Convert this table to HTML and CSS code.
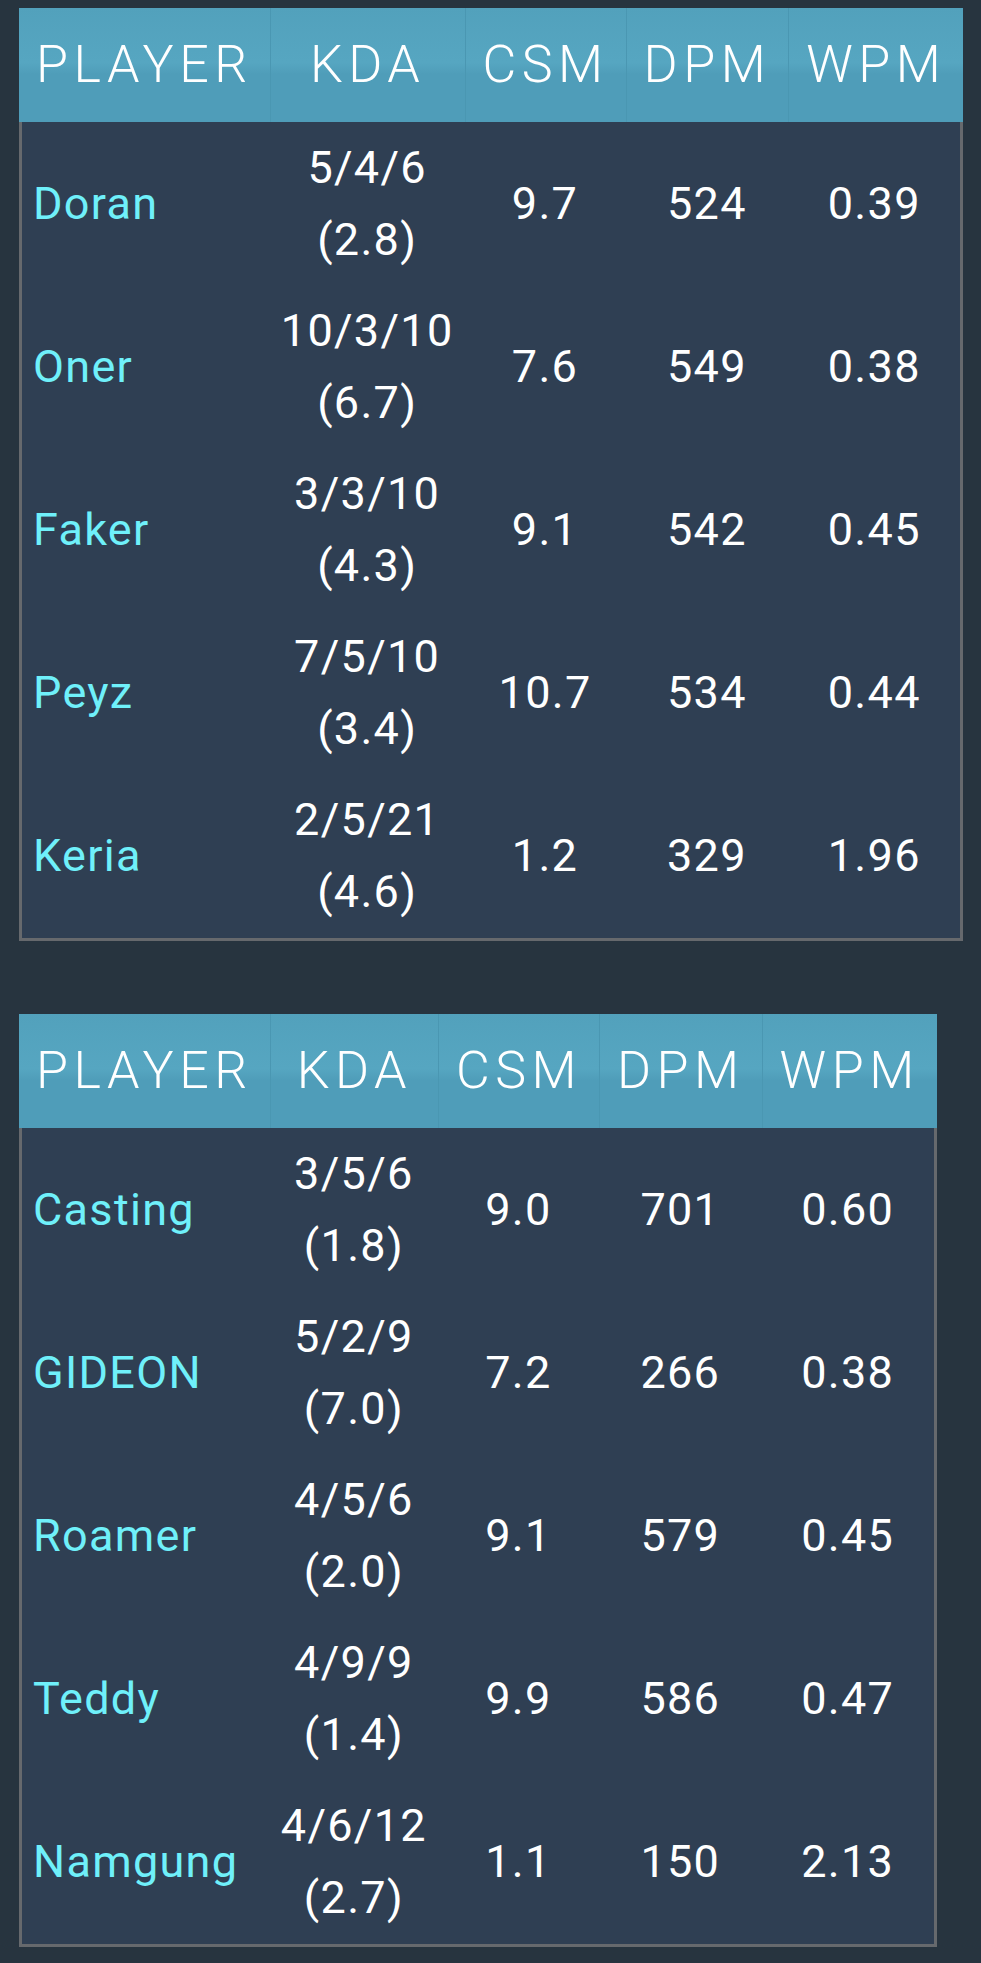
FILE: index.html
```html
<!DOCTYPE html>
<html lang="en">
<head>
<meta charset="utf-8">
<title>Player stats</title>
<link rel="stylesheet" href="styles.css">
</head>
<body>
<div class="page">
  <table class="stats">
    <thead>
      <tr><th>PLAYER</th><th>KDA</th><th>CSM</th><th>DPM</th><th>WPM</th></tr>
    </thead>
    <tbody>
      <tr><td class="name">Doran</td><td>5/4/6<br>(2.8)</td><td>9.7</td><td>524</td><td>0.39</td></tr>
      <tr><td class="name">Oner</td><td>10/3/10<br>(6.7)</td><td>7.6</td><td>549</td><td>0.38</td></tr>
      <tr><td class="name">Faker</td><td>3/3/10<br>(4.3)</td><td>9.1</td><td>542</td><td>0.45</td></tr>
      <tr><td class="name">Peyz</td><td>7/5/10<br>(3.4)</td><td>10.7</td><td>534</td><td>0.44</td></tr>
      <tr><td class="name">Keria</td><td>2/5/21<br>(4.6)</td><td>1.2</td><td>329</td><td>1.96</td></tr>
    </tbody>
  </table>
  <table class="stats">
    <thead>
      <tr><th>PLAYER</th><th>KDA</th><th>CSM</th><th>DPM</th><th>WPM</th></tr>
    </thead>
    <tbody>
      <tr><td class="name">Casting</td><td>3/5/6<br>(1.8)</td><td>9.0</td><td>701</td><td>0.60</td></tr>
      <tr><td class="name">GIDEON</td><td>5/2/9<br>(7.0)</td><td>7.2</td><td>266</td><td>0.38</td></tr>
      <tr><td class="name">Roamer</td><td>4/5/6<br>(2.0)</td><td>9.1</td><td>579</td><td>0.45</td></tr>
      <tr><td class="name">Teddy</td><td>4/9/9<br>(1.4)</td><td>9.9</td><td>586</td><td>0.47</td></tr>
      <tr><td class="name">Namgung</td><td>4/6/12<br>(2.7)</td><td>1.1</td><td>150</td><td>2.13</td></tr>
    </tbody>
  </table>
</div>
</body>
</html>
```
FILE: styles.css
```css
html, body {
  margin: 0;
  padding: 0;
  background: #27343f;
}
body {
  font-family: Roboto, "Liberation Sans", sans-serif;
  color: #ffffff;
}
.page {
  padding: 8px 19px 20px;
  display: flex;
  flex-direction: column;
  align-items: flex-start;
  gap: 73px;
}
.stats {
  border-collapse: separate;
  border-spacing: 0;
}
.stats th {
  font-weight: 300;
  font-size: 52px;
  line-height: 72px;
  letter-spacing: 5.5px;
  padding: 21px 17px;
  text-align: center;
  color: #ffffff;
  background: linear-gradient(to bottom, #52a1bc 0%, #56a6c1 48%, #4f9db9 58%, #4f9db9 100%);
  border-left: 1px solid #4a97b2;
  white-space: nowrap;
}
.stats th:first-child {
  border-left: none;
}
.stats td {
  font-size: 45px;
  line-height: 72px;
  letter-spacing: 1.3px;
  padding: 9.6px 11px;
  text-align: center;
  background: #2f3f53;
  white-space: nowrap;
}
.stats td.name {
  text-align: left;
  color: #6ff0fa;
}
.stats td:first-child {
  border-left: 3px solid #66696d;
}
.stats td:last-child {
  border-right: 3px solid #66696d;
}
.stats tbody tr:last-child td {
  border-bottom: 3px solid #66696d;
}
```
